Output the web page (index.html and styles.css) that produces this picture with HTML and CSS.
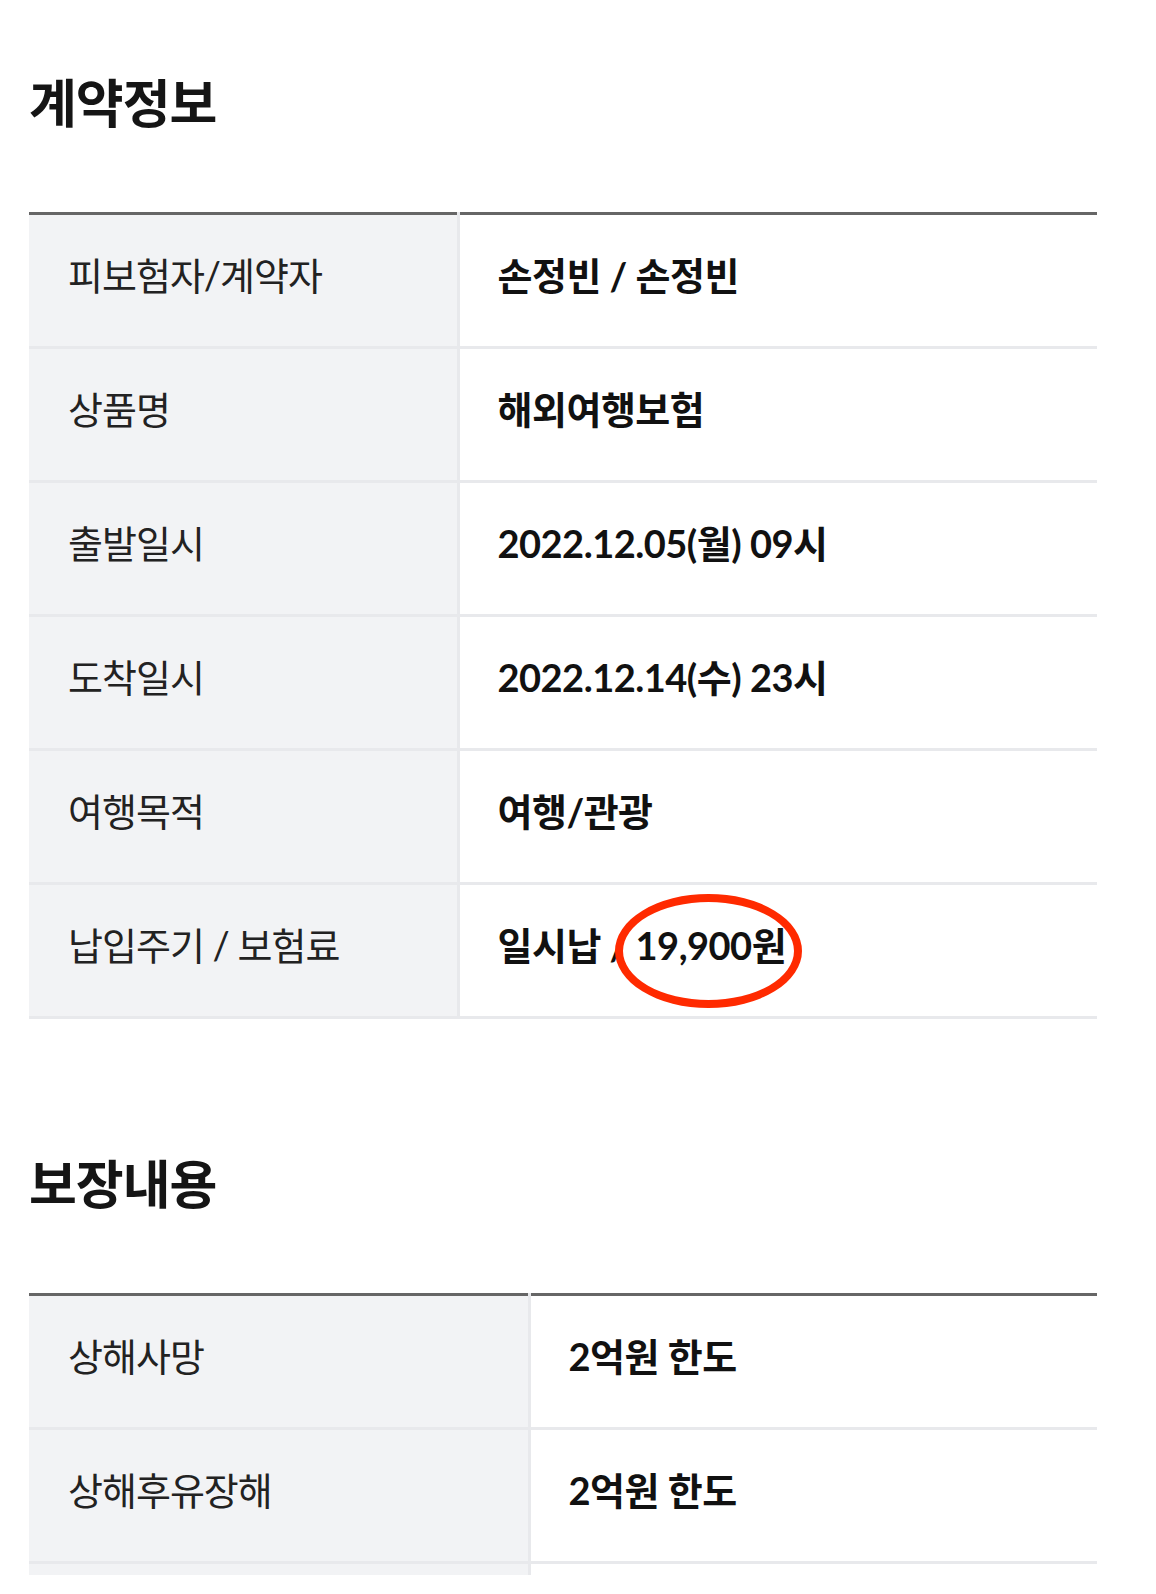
FILE: index.html
```html
<!DOCTYPE html>
<html lang="ko">
<head>
<meta charset="utf-8">
<title>계약정보</title>
<link rel="stylesheet" href="styles.css">
</head>
<body>
<main class="page">
  <section class="section">
    <h2 class="section-title">계약정보</h2>
    <table class="info-table info-table--contract">
      <tbody>
        <tr><th>피보험자/계약자</th><td>손정빈 / 손정빈</td></tr>
        <tr><th>상품명</th><td>해외여행보험</td></tr>
        <tr><th>출발일시</th><td>2022.12.05(월) 09시</td></tr>
        <tr><th>도착일시</th><td>2022.12.14(수) 23시</td></tr>
        <tr><th>여행목적</th><td>여행/관광</td></tr>
        <tr><th>납입주기 / 보험료</th><td><span class="premium">일시납 / <span class="amount">19,900원<span class="circle-mark" aria-hidden="true"></span></span></span></td></tr>
      </tbody>
    </table>
  </section>
  <section class="section section--second">
    <h2 class="section-title">보장내용</h2>
    <table class="info-table info-table--coverage">
      <tbody>
        <tr><th>상해사망</th><td>2억원 한도</td></tr>
        <tr><th>상해후유장해</th><td>2억원 한도</td></tr>
        <tr class="row-cut"><th></th><td></td></tr>
      </tbody>
    </table>
  </section>
</main>
</body>
</html>
```
FILE: styles.css
```css
html, body {
  margin: 0;
  padding: 0;
  background: #ffffff;
}
body {
  font-family: Lato, "Noto Sans CJK KR", sans-serif;
  color: #111;
}
.page {
  padding: 71px 0 0 29px;
  width: 1068px;
  height: 1523px;
  overflow: hidden;
}
.section-title {
  margin: 0 0 77px 0;
  font-size: 52px;
  line-height: 64px;
  font-weight: 700;
  letter-spacing: -1px;
  color: #151515;
}
.section--second {
  margin-top: 133px;
}
.info-table {
  width: 1068px;
  border-collapse: collapse;
  border-top: 3px solid #666;
  table-layout: fixed;
}
.info-table th,
.info-table td {
  height: 134px;
  padding: 0 0 10px 39px;
  box-sizing: border-box;
  border-bottom: 3px solid #e8e9ec;
  text-align: left;
  vertical-align: middle;
  line-height: 1.2;
}
.info-table th {
  background: #f2f3f5;
  border-right: 3px solid #e8e9ec;
  font-weight: 400;
  font-size: 38px;
  letter-spacing: -1px;
  color: #222;
}
.info-table td {
  font-weight: 700;
  font-size: 38px;
  letter-spacing: -0.5px;
  color: #111;
  padding-left: 38px;
}
.info-table--contract th { width: 429px; }
.info-table--coverage th { width: 500px; }
.info-table .row-cut th,
.info-table .row-cut td {
  height: 12px;
  padding: 0;
  border-bottom: 0;
}
.premium {
  position: relative;
}
.amount {
  position: relative;
}
.circle-mark {
  position: absolute;
  left: -21px;
  top: -28px;
  width: 171px;
  height: 98px;
  border: 8px solid #ff2a00;
  border-radius: 50%;
  pointer-events: none;
}
```
